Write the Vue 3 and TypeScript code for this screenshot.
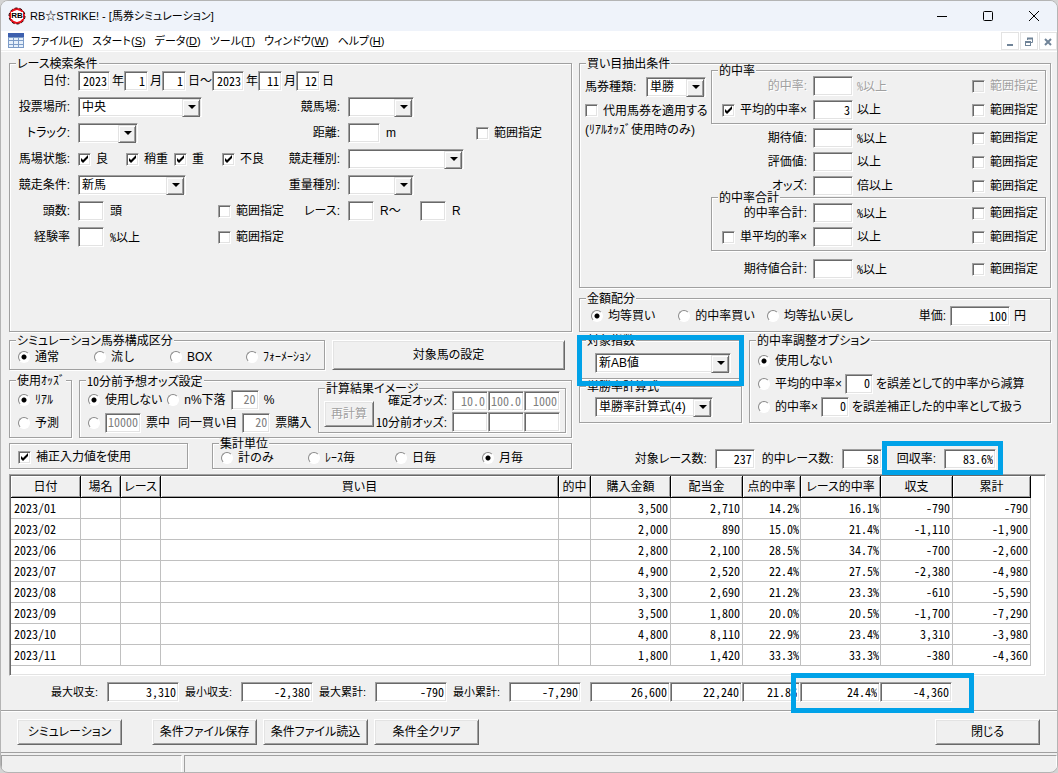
<script setup lang="ts">
interface Row {
  month: string
  bought: string
  paid: string
  pointRate: string
  raceRate: string
  balance: string
  total: string
}

interface Choice {
  label: string
  on: boolean
}

const menus = [
  { text: 'ファイル', key: 'F' },
  { text: 'スタート', key: 'S' },
  { text: 'データ', key: 'D' },
  { text: 'ツール', key: 'T' },
  { text: 'ウィンドウ', key: 'W' },
  { text: 'ヘルプ', key: 'H' },
]

const ground = ['良', '稍重', '重', '不良']

const kinds: Choice[] = [
  { label: '通常', on: true },
  { label: '流し', on: false },
  { label: 'BOX', on: false },
  { label: 'ﾌｫｰﾒｰｼｮﾝ', on: false },
]

const units: Choice[] = [
  { label: '計のみ', on: false },
  { label: 'ﾚｰｽ毎', on: false },
  { label: '日毎', on: false },
  { label: '月毎', on: true },
]

const amounts: Choice[] = [
  { label: '均等買い', on: true },
  { label: '的中率買い', on: false },
  { label: '均等払い戻し', on: false },
]

const middleRows = [
  { id: 'expect', label: '期待値:', suffix: '%以上' },
  { id: 'rating', label: '評価値:', suffix: '以上' },
  { id: 'odds', label: 'オッズ:', suffix: '倍以上' },
]

const headers = ['日付', '場名', 'レース', '買い目', '的中', '購入金額', '配当金', '点的中率', 'レース的中率', '収支', '累計']

const rows: Row[] = [
  { month: '2023/01', bought: '3,500', paid: '2,710', pointRate: '14.2%', raceRate: '16.1%', balance: '-790', total: '-790' },
  { month: '2023/02', bought: '2,000', paid: '890', pointRate: '15.0%', raceRate: '21.4%', balance: '-1,110', total: '-1,900' },
  { month: '2023/06', bought: '2,800', paid: '2,100', pointRate: '28.5%', raceRate: '34.7%', balance: '-700', total: '-2,600' },
  { month: '2023/07', bought: '4,900', paid: '2,520', pointRate: '22.4%', raceRate: '27.5%', balance: '-2,380', total: '-4,980' },
  { month: '2023/08', bought: '3,300', paid: '2,690', pointRate: '21.2%', raceRate: '23.3%', balance: '-610', total: '-5,590' },
  { month: '2023/09', bought: '3,500', paid: '1,800', pointRate: '20.0%', raceRate: '20.5%', balance: '-1,700', total: '-7,290' },
  { month: '2023/10', bought: '4,800', paid: '8,110', pointRate: '22.9%', raceRate: '23.4%', balance: '3,310', total: '-3,980' },
  { month: '2023/11', bought: '1,800', paid: '1,420', pointRate: '33.3%', raceRate: '33.3%', balance: '-380', total: '-4,360' },
]

const extremes = [
  { id: 'max-balance', label: '最大収支:', value: '3,310' },
  { id: 'min-balance', label: '最小収支:', value: '-2,380' },
  { id: 'max-total', label: '最大累計:', value: '-790' },
  { id: 'min-total', label: '最小累計:', value: '-7,290' },
]
</script>

<template>
  <div class="window">
    <header class="titlebar">
      <svg class="logo" viewBox="0 0 18 18" aria-hidden="true">
        <circle cx="9" cy="9" r="7" fill="#fff" stroke="#e8101c" stroke-width="2" />
        <circle cx="9" cy="9" r="8" fill="none" stroke="#2a0808" stroke-width="1" stroke-dasharray="3 2" />
        <path d="M5 3.5Q9 1 13 3.5M5 14.5Q9 17 13 14.5" fill="none" stroke="#e8101c" stroke-width="1" />
        <rect x="3" y="5" width="12" height="7" fill="#fff" />
        <text x="9" y="11" text-anchor="middle" font-family="Liberation Sans" font-weight="700" font-size="8" fill="#000">RB</text>
      </svg>
      <h1>RB☆STRIKE! - [馬券シミュレーション]</h1>
      <div class="caption-buttons">
        <button type="button" aria-label="最小化">
          <svg viewBox="0 0 12 12"><path d="M1 6.5H11" stroke="#000" fill="none" /></svg>
        </button>
        <button type="button" aria-label="最大化">
          <svg viewBox="0 0 12 12"><rect x="1.5" y="1.5" width="9" height="9" rx="1" stroke="#000" fill="none" /></svg>
        </button>
        <button type="button" aria-label="終了">
          <svg viewBox="0 0 12 12"><path d="M1 1L11 11M11 1L1 11" stroke="#000" fill="none" /></svg>
        </button>
      </div>
    </header>

    <nav class="menubar">
      <svg class="sheet" viewBox="0 0 16 15" aria-hidden="true">
        <rect width="16" height="15" fill="#7d9cc8" />
        <rect width="16" height="4" fill="#3c5fae" />
        <g fill="#e6f0fb">
          <rect x="1" y="5" width="4" height="2" /><rect x="6" y="5" width="4" height="2" /><rect x="11" y="5" width="4" height="2" />
          <rect x="1" y="8" width="4" height="3" /><rect x="6" y="8" width="4" height="3" /><rect x="11" y="8" width="4" height="3" />
          <rect x="1" y="12" width="4" height="2" /><rect x="6" y="12" width="4" height="2" /><rect x="11" y="12" width="4" height="2" />
        </g>
      </svg>
      <button v-for="m in menus" :key="m.key" type="button" class="menu">{{ m.text }}(<u>{{ m.key }}</u>)</button>
      <div class="mdi">
        <button type="button" aria-label="子ウィンドウを最小化">
          <svg viewBox="0 0 10 10"><path d="M2 8H8" stroke="#708498" stroke-width="2" /></svg>
        </button>
        <button type="button" aria-label="子ウィンドウを元に戻す">
          <svg viewBox="0 0 10 10">
            <path d="M3.5 3V1.5H8.5V5.5H7" stroke="#708498" fill="none" /><path d="M3 1.5H9M1 5H7" stroke="#708498" stroke-width="2" />
            <rect x="1.5" y="4.5" width="5" height="4" stroke="#708498" fill="none" />
          </svg>
        </button>
        <button type="button" aria-label="子ウィンドウを閉じる">
          <svg viewBox="0 0 10 10"><path d="M2 2L8 8M8 2L2 8" stroke="#708498" stroke-width="2" /></svg>
        </button>
      </div>
    </nav>

    <main class="client">
      <div class="columns">
        <fieldset class="search">
          <legend>レース検索条件</legend>
          <div class="line">
            <label class="lead" for="y1">日付:</label>
            <div class="dates">
              <input id="y1" class="box w32" value="2023" /><span>年</span>
              <input class="box w24" value="1" aria-label="開始月" /><span>月</span>
              <input class="box w24" value="1" aria-label="開始日" /><span>日～</span>
              <input class="box w32" value="2023" aria-label="終了年" /><span>年</span>
              <input class="box w24" value="11" aria-label="終了月" /><span>月</span>
              <input class="box w24" value="12" aria-label="終了日" /><span>日</span>
            </div>
          </div>
          <div class="line">
            <label class="lead" for="place">投票場所:</label>
            <div class="area"><span class="combo w124"><select id="place"><option>中央</option></select></span></div>
            <label class="lead second" for="course">競馬場:</label>
            <span class="combo w66"><select id="course"><option></option></select></span>
          </div>
          <div class="line">
            <label class="lead" for="track">トラック:</label>
            <div class="area"><span class="combo w60"><select id="track"><option></option></select></span></div>
            <label class="lead second" for="dist">距離:</label>
            <input id="dist" class="box w32" /><span class="after wide">m</span>
            <label class="check"><input type="checkbox" /><span>範囲指定</span></label>
          </div>
          <div class="line">
            <span class="lead">馬場状態:</span>
            <div class="area grounds">
              <label v-for="g in ground" :key="g" class="check"><input type="checkbox" checked /><span>{{ g }}</span></label>
            </div>
            <label class="lead second" for="racekind">競走種別:</label>
            <span class="combo w116"><select id="racekind"><option></option></select></span>
          </div>
          <div class="line">
            <label class="lead" for="cond">競走条件:</label>
            <div class="area"><span class="combo w108"><select id="cond"><option>新馬</option></select></span></div>
            <label class="lead second" for="weight">重量種別:</label>
            <span class="combo w66"><select id="weight"><option></option></select></span>
          </div>
          <div class="line">
            <label class="lead" for="heads">頭数:</label>
            <div class="area">
              <input id="heads" class="box w26" /><span class="after">頭</span>
              <label class="check push"><input type="checkbox" /><span>範囲指定</span></label>
            </div>
            <label class="lead second" for="race1">レース:</label>
            <input id="race1" class="box w26" /><span class="after upto">R～</span>
            <input class="box w26" aria-label="終了レース" /><span class="after">R</span>
          </div>
          <div class="line">
            <label class="lead" for="exp">経験率</label>
            <div class="area">
              <input id="exp" class="box w26" /><span class="after"><i>%</i>以上</span>
              <label class="check push"><input type="checkbox" /><span>範囲指定</span></label>
            </div>
          </div>
        </fieldset>

        <div class="stack">
          <fieldset class="extract">
            <legend>買い目抽出条件</legend>
            <div class="ticket">
              <div class="ticket-kind">
                <label for="ticket">馬券種類:</label>
                <span class="combo w60"><select id="ticket"><option>単勝</option></select></span>
              </div>
              <label class="check"><input type="checkbox" /><span>代用馬券を適用する</span></label>
              <p>(ﾘｱﾙｵｯｽﾞ使用時のみ)</p>
            </div>
            <div class="filters">
              <fieldset class="sub">
                <legend>的中率</legend>
                <div class="filter off">
                  <label class="name" for="hit">的中率:</label>
                  <input id="hit" class="box w40" disabled /><span><i>%</i>以上</span>
                  <label class="check"><input type="checkbox" disabled /><span>範囲指定</span></label>
                </div>
                <div class="filter">
                  <label class="check name"><input type="checkbox" checked /><span>平均的中率×</span></label>
                  <input class="box w40" value="3" aria-label="平均的中率の倍率" /><span>以上</span>
                  <label class="check"><input type="checkbox" /><span>範囲指定</span></label>
                </div>
              </fieldset>
              <div class="plain">
                <div v-for="r in middleRows" :key="r.id" class="filter">
                  <label class="name" :for="r.id">{{ r.label }}</label>
                  <input :id="r.id" class="box w40" /><span v-if="r.suffix.startsWith('%')"><i>%</i>以上</span><span v-else>{{ r.suffix }}</span>
                  <label class="check"><input type="checkbox" /><span>範囲指定</span></label>
                </div>
              </div>
              <fieldset class="sub">
                <legend>的中率合計</legend>
                <div class="filter">
                  <label class="name" for="hitsum">的中率合計:</label>
                  <input id="hitsum" class="box w40" /><span><i>%</i>以上</span>
                  <label class="check"><input type="checkbox" /><span>範囲指定</span></label>
                </div>
                <div class="filter">
                  <label class="check name"><input type="checkbox" /><span>単平均的率×</span></label>
                  <input class="box w40" aria-label="単平均的率の倍率" /><span>以上</span>
                  <label class="check"><input type="checkbox" /><span>範囲指定</span></label>
                </div>
              </fieldset>
              <div class="plain last">
                <div class="filter">
                  <label class="name" for="expsum">期待値合計:</label>
                  <input id="expsum" class="box w40" /><span><i>%</i>以上</span>
                  <label class="check"><input type="checkbox" /><span>範囲指定</span></label>
                </div>
              </div>
            </div>
          </fieldset>

          <fieldset class="amount">
            <legend>金額配分</legend>
            <label v-for="a in amounts" :key="a.label" class="radio"><input type="radio" name="amount" :checked="a.on" /><span>{{ a.label }}</span></label>
            <label class="unit" for="unit">単価:</label>
            <input id="unit" class="box w60" value="100" /><span class="yen">円</span>
          </fieldset>
        </div>
      </div>

      <div class="columns lower">
        <div class="stack">
          <div class="kind-row">
            <fieldset class="kinds">
              <legend>シミュレーション馬券構成区分</legend>
              <label v-for="k in kinds" :key="k.label" class="radio"><input type="radio" name="kind" :checked="k.on" /><span>{{ k.label }}</span></label>
            </fieldset>
            <button type="button" class="push-button target">対象馬の設定</button>
          </div>

          <div class="odds-row">
            <fieldset class="use-odds">
              <legend>使用ｵｯｽﾞ</legend>
              <label class="radio"><input type="radio" name="odds" checked /><span>ﾘｱﾙ</span></label>
              <label class="radio"><input type="radio" name="odds" /><span>予測</span></label>
            </fieldset>
            <fieldset class="before">
              <legend><b>10</b>分前予想オッズ設定</legend>
              <div class="before-rows">
                <div class="before-line">
                  <label class="radio"><input type="radio" name="before" checked /><span>使用しない</span></label>
                  <label class="radio drop"><input type="radio" name="before" /><span>n%下落</span></label>
                  <input class="box w28" value="20" disabled aria-label="下落率" /><span>%</span>
                </div>
                <div class="before-line">
                  <label class="radio bare"><input type="radio" name="before" aria-label="票数指定" /></label>
                  <input class="box w36" value="10000" disabled aria-label="票数" /><span class="votes">票中</span>
                  <span>同一買い目</span>
                  <input class="box w28" value="20" disabled aria-label="購入票数" /><span>票購入</span>
                </div>
              </div>
              <fieldset class="calc">
                <legend>計算結果イメージ</legend>
                <button type="button" class="push-button recalc" disabled>再計算</button>
                <div class="calc-grid">
                  <label for="fix1">確定オッズ:</label>
                  <input id="fix1" class="box" value="10.0" disabled />
                  <input class="box" value="100.0" disabled aria-label="確定オッズ2" />
                  <input class="box" value="1000" disabled aria-label="確定オッズ3" />
                  <label for="pre1"><b>10</b>分前オッズ:</label>
                  <input id="pre1" class="box" disabled />
                  <input class="box" disabled aria-label="10分前オッズ2" />
                  <input class="box" disabled aria-label="10分前オッズ3" />
                </div>
              </fieldset>
            </fieldset>
          </div>

          <div class="unit-row">
            <div class="frame"><label class="check"><input type="checkbox" checked /><span>補正入力値を使用</span></label></div>
            <fieldset class="units">
              <legend>集計単位</legend>
              <label v-for="u in units" :key="u.label" class="radio"><input type="radio" name="unit" :checked="u.on" /><span>{{ u.label }}</span></label>
            </fieldset>
          </div>
        </div>

        <div class="stack">
          <div class="index-row">
            <div class="index-stack">
              <div class="marked index">
                <fieldset>
                  <legend>対象指数</legend>
                  <span class="combo w136"><select aria-label="対象指数"><option>新AB値</option></select></span>
                </fieldset>
              </div>
              <fieldset class="formula">
                <legend>単勝率計算式</legend>
                <span class="combo w118"><select aria-label="単勝率計算式"><option>単勝率計算式(4)</option></select></span>
              </fieldset>
            </div>
            <fieldset class="adjust">
              <legend>的中率調整オプション</legend>
              <div class="adjust-line"><label class="radio"><input type="radio" name="adjust" checked /><span>使用しない</span></label></div>
              <div class="adjust-line">
                <label class="radio"><input type="radio" name="adjust" /><span>平均的中率×</span></label>
                <input class="box w28" value="0" aria-label="減算する誤差" /><span>を誤差として的中率から減算</span>
              </div>
              <div class="adjust-line">
                <label class="radio"><input type="radio" name="adjust" /><span>的中率×</span></label>
                <input class="box w28" value="0" aria-label="補正する誤差" /><span>を誤差補正した的中率として扱う</span>
              </div>
            </fieldset>
          </div>
          <div class="stats">
            <label for="races">対象レース数:</label><input id="races" class="box w40" value="237" readonly />
            <label for="hits">的中レース数:</label><input id="hits" class="box w40" value="58" readonly />
            <div class="marked recovery">
              <label for="recovery">回収率:</label><input id="recovery" class="box w52" value="83.6%" readonly />
            </div>
          </div>
        </div>
      </div>

      <div class="grid-frame">
        <table>
          <colgroup>
            <col class="c70" /><col class="c40" /><col class="c40" /><col /><col class="c32" /><col class="c80" />
            <col class="c72" /><col class="c58" /><col class="c80" /><col class="c72" /><col class="c78" />
          </colgroup>
          <thead>
            <tr><th v-for="h in headers" :key="h" scope="col">{{ h }}</th></tr>
          </thead>
          <tbody>
            <tr v-for="r in rows" :key="r.month">
              <td class="month">{{ r.month }}</td><td></td><td></td><td></td><td></td>
              <td>{{ r.bought }}</td><td>{{ r.paid }}</td><td class="tight">{{ r.pointRate }}</td>
              <td class="tight">{{ r.raceRate }}</td><td>{{ r.balance }}</td><td>{{ r.total }}</td>
            </tr>
          </tbody>
        </table>
      </div>

      <div class="summary">
        <div v-for="e in extremes" :key="e.id" class="extreme">
          <label :for="e.id">{{ e.label }}</label><input :id="e.id" class="box w72" :value="e.value" readonly />
        </div>
        <div class="totals">
          <input class="box w80" value="26,600" readonly aria-label="購入金額合計" />
          <input class="box w72" value="22,240" readonly aria-label="配当金合計" />
          <input class="box w58" value="21.8%" readonly aria-label="点的中率合計" />
          <div class="marked result">
            <input class="box w80" value="24.4%" readonly aria-label="レース的中率合計" />
            <input class="box w72" value="-4,360" readonly aria-label="収支合計" />
          </div>
        </div>
      </div>
    </main>

    <div class="actions">
      <button type="button" class="push-button first">シミュレーション</button>
      <button type="button" class="push-button">条件ファイル保存</button>
      <button type="button" class="push-button">条件ファイル読込</button>
      <button type="button" class="push-button">条件全クリア</button>
      <button type="button" class="push-button close">閉じる</button>
    </div>
    <footer class="status"><div></div><div></div></footer>
  </div>
</template>

<style>
body {
  margin: 0;
  background: #d4d4d4;
}
</style>

<style scoped>
* {
  box-sizing: border-box;
}

.window {
  border: 1px solid #b4b4b4;
  border-radius: 8px;
  overflow: hidden;
  background: #f0f0f0;
  color: #000;
  font-family: "Liberation Sans", "Noto Sans CJK JP", sans-serif;
  font-size: 12px;
  line-height: 16px;
  font-feature-settings: "palt";
  white-space: nowrap;
}

button,
input,
select {
  font: inherit;
  font-feature-settings: inherit;
  color: inherit;
  margin: 0;
  padding: 0;
  border-radius: 0;
}

i,
b,
p,
h1 {
  margin: 0;
  font-style: normal;
  font-weight: 400;
  font-size: 12px;
}

i,
b {
  font-family: "Noto Sans CJK JP", sans-serif;
  font-feature-settings: "hwid";
}

.titlebar {
  display: flex;
  align-items: center;
  height: 30px;
  padding-left: 7px;
  background: #eff3fa;
}

.titlebar h1,
.menu {
  font-size: 11px;
}

.logo {
  width: 18px;
  height: 18px;
  margin-right: 4px;
}

.caption-buttons {
  display: flex;
  margin-left: auto;
}

.caption-buttons button {
  width: 46px;
  height: 30px;
  border: 0;
  background: none;
}

.caption-buttons svg {
  display: block;
  width: 12px;
  height: 12px;
  margin: auto;
}

.menubar {
  display: flex;
  align-items: center;
  gap: 9px;
  height: 20px;
  padding-left: 7px;
  background: #fff;
  border-bottom: 1px solid #f0f0f0;
}

.sheet {
  width: 16px;
  height: 15px;
  margin-right: -2px;
}

.menu {
  border: 0;
  background: none;
}

.mdi {
  display: flex;
  gap: 1px;
  margin-left: auto;
}

.mdi button {
  width: 18px;
  height: 18px;
  border: 1px solid #e3e3e3;
  background: #fff;
}

.mdi svg {
  display: block;
  width: 10px;
  height: 10px;
  margin: 2px auto 0;
}

.client {
  padding: 11px 6px 8px 8px;
  border-top: 1px solid #fff;
}

.columns {
  display: grid;
  grid-template-columns: 563fr 472fr;
  gap: 7px;
}

.lower {
  margin-top: 8px;
}

.stack {
  display: flex;
  flex-direction: column;
}

fieldset,
.frame {
  position: relative;
  min-width: 0;
  margin: 0;
  padding: 0;
  border: 1px solid #a0a0a0;
  box-shadow: 1px 1px 0 #fff, inset 1px 1px 0 #fff;
}

legend {
  position: absolute;
  top: -6px;
  left: 6px;
  padding: 0 1px;
  background: #f0f0f0;
  line-height: 12px;
}

/* Sunken text boxes */
.box {
  width: 36px;
  height: 20px;
  padding: 0 2px 2px;
  border: 1px solid;
  border-color: #a0a0a0 #fff #fff #a0a0a0;
  box-shadow: inset 1px 1px 0 #696969, inset -1px -1px 0 #e3e3e3;
  background: #fff;
  font-family: "Noto Sans CJK JP", sans-serif;
  font-feature-settings: "hwid";
  text-align: right;
  outline: 0;
  flex: none;
}

.box:disabled {
  color: #808080;
}

.w24 { width: 24px; }
.w26 { width: 26px; }
.w28 { width: 28px; }
.w32 { width: 32px; }
.w36 { width: 36px; }
.w40 { width: 40px; }
.w52 { width: 52px; }
.w58 { width: 58px; }
.w60 { width: 60px; }
.w66 { width: 66px; }
.w72 { width: 72px; }
.w80 { width: 80px; }
.w108 { width: 108px; }
.w116 { width: 116px; }
.w118 { width: 118px; }
.w124 { width: 124px; }
.w136 { width: 136px; }

.combo {
  position: relative;
  display: inline-block;
  height: 20px;
  flex: none;
}

.combo select {
  display: block;
  width: 100%;
  height: 20px;
  padding: 0 18px 0 3px;
  appearance: none;
  border: 1px solid;
  border-color: #a0a0a0 #fff #fff #a0a0a0;
  box-shadow: inset 1px 1px 0 #696969, inset -1px -1px 0 #e3e3e3;
  background: #fff;
  outline: 0;
}

.combo::before {
  content: "";
  position: absolute;
  top: 2px;
  right: 2px;
  width: 16px;
  height: 16px;
  background: #f0f0f0;
  border: 1px solid;
  border-color: #e3e3e3 #696969 #696969 #e3e3e3;
  box-shadow: inset 1px 1px 0 #fff, inset -1px -1px 0 #a0a0a0;
  pointer-events: none;
}

.combo::after {
  content: "";
  position: absolute;
  top: 8px;
  right: 6px;
  border: 4px solid transparent;
  border-top-color: #000;
  border-bottom: 0;
  pointer-events: none;
}

.check,
.radio {
  display: flex;
  align-items: center;
}

.check input {
  appearance: none;
  flex: none;
  width: 13px;
  height: 13px;
  margin-right: 5px;
  border: 1px solid;
  border-color: #a0a0a0 #fff #fff #a0a0a0;
  box-shadow: inset 1px 1px 0 #696969, inset -1px -1px 0 #e3e3e3;
  background: #fff;
}

.check input:checked {
  background: #fff url("data:image/svg+xml,%3Csvg xmlns='http://www.w3.org/2000/svg' width='11' height='11'%3E%3Cpath d='M2 4v3l2 2 5-5V1L4 6z'/%3E%3C/svg%3E") center no-repeat;
}

.check input:disabled {
  background: #f0f0f0;
}

.radio input {
  appearance: none;
  flex: none;
  width: 12px;
  height: 12px;
  margin-right: 5px;
  border: 1px solid;
  border-color: #8a8a8a #fff #fff #8a8a8a;
  border-radius: 50%;
  background: #fff;
}

.radio input:checked {
  background: radial-gradient(circle, #000 2px, #fff 3px);
}

.push-button {
  height: 26px;
  border: 1px solid;
  border-color: #fff #696969 #696969 #fff;
  box-shadow: inset 1px 1px 0 #e3e3e3, inset -1px -1px 0 #a0a0a0;
  background: #f0f0f0;
  text-align: center;
}

.push-button:disabled,
.off {
  color: #a0a0a0;
  text-shadow: 1px 1px 0 #fff;
}

/* Race search */
.search {
  padding-top: 4px;
}

.line {
  display: flex;
  align-items: center;
  height: 26px;
}

.lead {
  width: 60px;
  margin-right: 8px;
  text-align: right;
}

.second {
  width: 56px;
}

.area {
  display: flex;
  align-items: center;
  width: 206px;
}

.dates {
  display: flex;
  align-items: center;
}

.dates span {
  margin-left: 2px;
}

.after {
  margin-left: 6px;
}

.upto {
  width: 40px;
}

.wide {
  width: 90px;
}

.push {
  margin-left: auto;
}

.grounds .check {
  width: 48px;
}

/* Ticket extraction */
.extract {
  display: grid;
  grid-template-columns: 131px 1fr;
  padding: 6px 4px 8px 0;
}

.ticket {
  display: flex;
  flex-direction: column;
  padding-left: 5px;
}

.ticket-kind {
  display: flex;
  align-items: center;
  justify-content: space-between;
  height: 34px;
  padding-right: 5px;
}

.ticket .check {
  height: 13px;
}

.ticket p {
  margin-top: 5px;
}

.sub {
  display: flex;
  flex-direction: column;
  gap: 4px;
  padding: 5px 0 3px;
}

.plain {
  display: flex;
  flex-direction: column;
  gap: 4px;
  padding: 4px 1px 1px;
}

.last {
  padding: 8px 1px 0;
}

.filter {
  display: flex;
  align-items: center;
  height: 20px;
  padding-right: 7px;
}

.filter .name {
  width: 95px;
  margin-right: 6px;
  text-align: right;
}

.filter > span {
  margin-left: 4px;
}

.filter .check {
  margin-left: auto;
}

.filter .check.name {
  justify-content: flex-end;
  margin-left: 0;
}

.amount {
  display: flex;
  align-items: center;
  margin-top: 10px;
  padding: 7px 24px 5px 11px;
}

.amount .radio {
  margin-right: 23px;
}

.amount .radio + .radio {
  margin-right: 12px;
}

.unit {
  margin: 0 4px 0 auto;
}

.yen {
  margin-left: 4px;
}

/* Simulation kinds */
.kind-row {
  display: flex;
  gap: 7px;
  padding-right: 7px;
}

.kinds {
  display: grid;
  grid-template-columns: repeat(4, 76px);
  width: 316px;
  height: 30px;
  padding: 6px 0 2px 8px;
}

/* Half-width kana keeps its fixed advance */
.kinds .radio,
.use-odds,
.ticket p,
.units .radio {
  font-feature-settings: normal;
}

.target {
  flex: 1;
  height: 30px;
}

.odds-row {
  display: flex;
  gap: 7px;
  margin-top: 10px;
}

.use-odds {
  width: 63px;
  padding: 7px 0 3px 8px;
}

.use-odds .radio {
  height: 23px;
}

.before {
  flex: 1;
  display: flex;
  padding: 0 5px 0 8px;
}

.before-rows {
  flex: 1;
  padding-top: 7px;
}

.before-line {
  display: flex;
  align-items: center;
  gap: 5px;
  height: 23px;
}

.before-line .bare input {
  margin-right: 0;
}

.votes {
  margin-right: 3px;
}

.calc {
  display: flex;
  align-items: center;
  width: 248px;
  margin: 7px 0 4px;
  padding: 2px 5px 0;
}

.recalc {
  width: 50px;
  margin-top: 4px;
}

.calc-grid {
  display: grid;
  grid-template-columns: 1fr repeat(3, 36px);
  row-gap: 1px;
  flex: 1;
  align-items: center;
}

.calc-grid label {
  text-align: right;
  padding-right: 5px;
}

.unit-row {
  display: flex;
  gap: 24px;
  margin-top: 5px;
}

.frame {
  width: 179px;
  padding: 3px 0 0 8px;
}

.frame .check {
  height: 20px;
}

.units {
  flex: 1;
  display: grid;
  grid-template-columns: repeat(4, 87px);
  height: 26px;
  padding: 4px 0 0 8px;
}

/* Index and adjustment */
.index-row {
  display: flex;
  gap: 7px;
}

.index-stack {
  width: 163px;
}

.index fieldset {
  padding: 12px 0 5px 15px;
}

.formula {
  margin-top: 7px;
  padding: 10px 0 5px 15px;
}

.index .combo,
.formula .combo {
  display: block;
}

.marked {
  position: relative;
}

.marked::after {
  content: "";
  position: absolute;
  z-index: 1;
  border: 5px solid #00a2e8;
  pointer-events: none;
}

.index::after {
  inset: -5px -2px -7px;
}

.adjust {
  flex: 1;
  padding: 8px 0 0 8px;
}

.adjust-line {
  display: flex;
  align-items: center;
  gap: 3px;
  height: 23px;
}

.stats {
  display: flex;
  align-items: center;
  justify-content: flex-end;
  height: 20px;
  margin-top: 26px;
  padding-right: 55px;
}

.stats label {
  margin-right: 8px;
}

.stats > .box {
  margin-right: 7px;
}

.recovery {
  display: flex;
  align-items: center;
  padding-left: 8px;
}

.recovery::after {
  inset: -8px -7px -6px -7px;
}

/* Result grid */
.grid-frame {
  margin: 5px 5px 0 0;
  padding: 1px 14px 9px 1px;
  border: 1px solid;
  border-color: #a0a0a0 #fff #fff #a0a0a0;
  box-shadow: inset 1px 1px 0 #696969, inset -1px -1px 0 #e3e3e3;
  background: #fff;
}

table {
  width: 100%;
  table-layout: fixed;
  border-collapse: separate;
  border-spacing: 0;
}

.c32 { width: 32px; }
.c40 { width: 40px; }
.c58 { width: 58px; }
.c70 { width: 70px; }
.c72 { width: 72px; }
.c78 { width: 78px; }
.c80 { width: 80px; }

th {
  height: 22px;
  padding: 0;
  border: solid #000;
  border-width: 0 1px 1px 0;
  box-shadow: inset 1px 1px 0 #fff, inset -1px -1px 0 #a0a0a0;
  background: #f0f0f0;
  font-weight: 400;
  text-align: center;
}

td {
  height: 21px;
  padding: 0 2px;
  border: solid #c0c0c0;
  border-width: 0 1px 1px 0;
  font-family: "Noto Sans CJK JP", sans-serif;
  font-feature-settings: "hwid";
  text-align: right;
}

td.tight {
  padding-right: 1px;
}

td.month {
  padding-left: 3px;
  text-align: left;
}

.summary {
  display: flex;
  align-items: center;
  justify-content: space-between;
  margin-top: 6px;
  padding: 0 99px 0 36px;
}

.extreme {
  display: flex;
  align-items: center;
  justify-content: space-between;
  width: 134px;
  padding-left: 6px;
}

.extreme label {
  font-size: 11px;
}

.totals {
  display: flex;
  margin-left: 9px;
}

.result {
  display: flex;
}

.result::after {
  inset: -9px -22px -11px -9px;
}

.actions {
  display: flex;
  align-items: center;
  gap: 6px;
  padding: 8px 17px 7px 16px;
  border-top: 1px solid #a0a0a0;
  border-bottom: 1px solid #a0a0a0;
  box-shadow: inset 0 1px 0 #fff;
}

.actions .push-button {
  width: 105px;
}

.actions .first {
  margin-right: 24px;
}

.actions .close {
  margin-left: auto;
}

.status {
  display: grid;
  grid-template-columns: 181px 1fr;
  gap: 2px;
  padding-top: 2px;
}

.status div {
  height: 17px;
  border: solid;
  border-width: 1px 1px 0;
  border-color: #a0a0a0 #fff #fff #a0a0a0;
}
</style>
